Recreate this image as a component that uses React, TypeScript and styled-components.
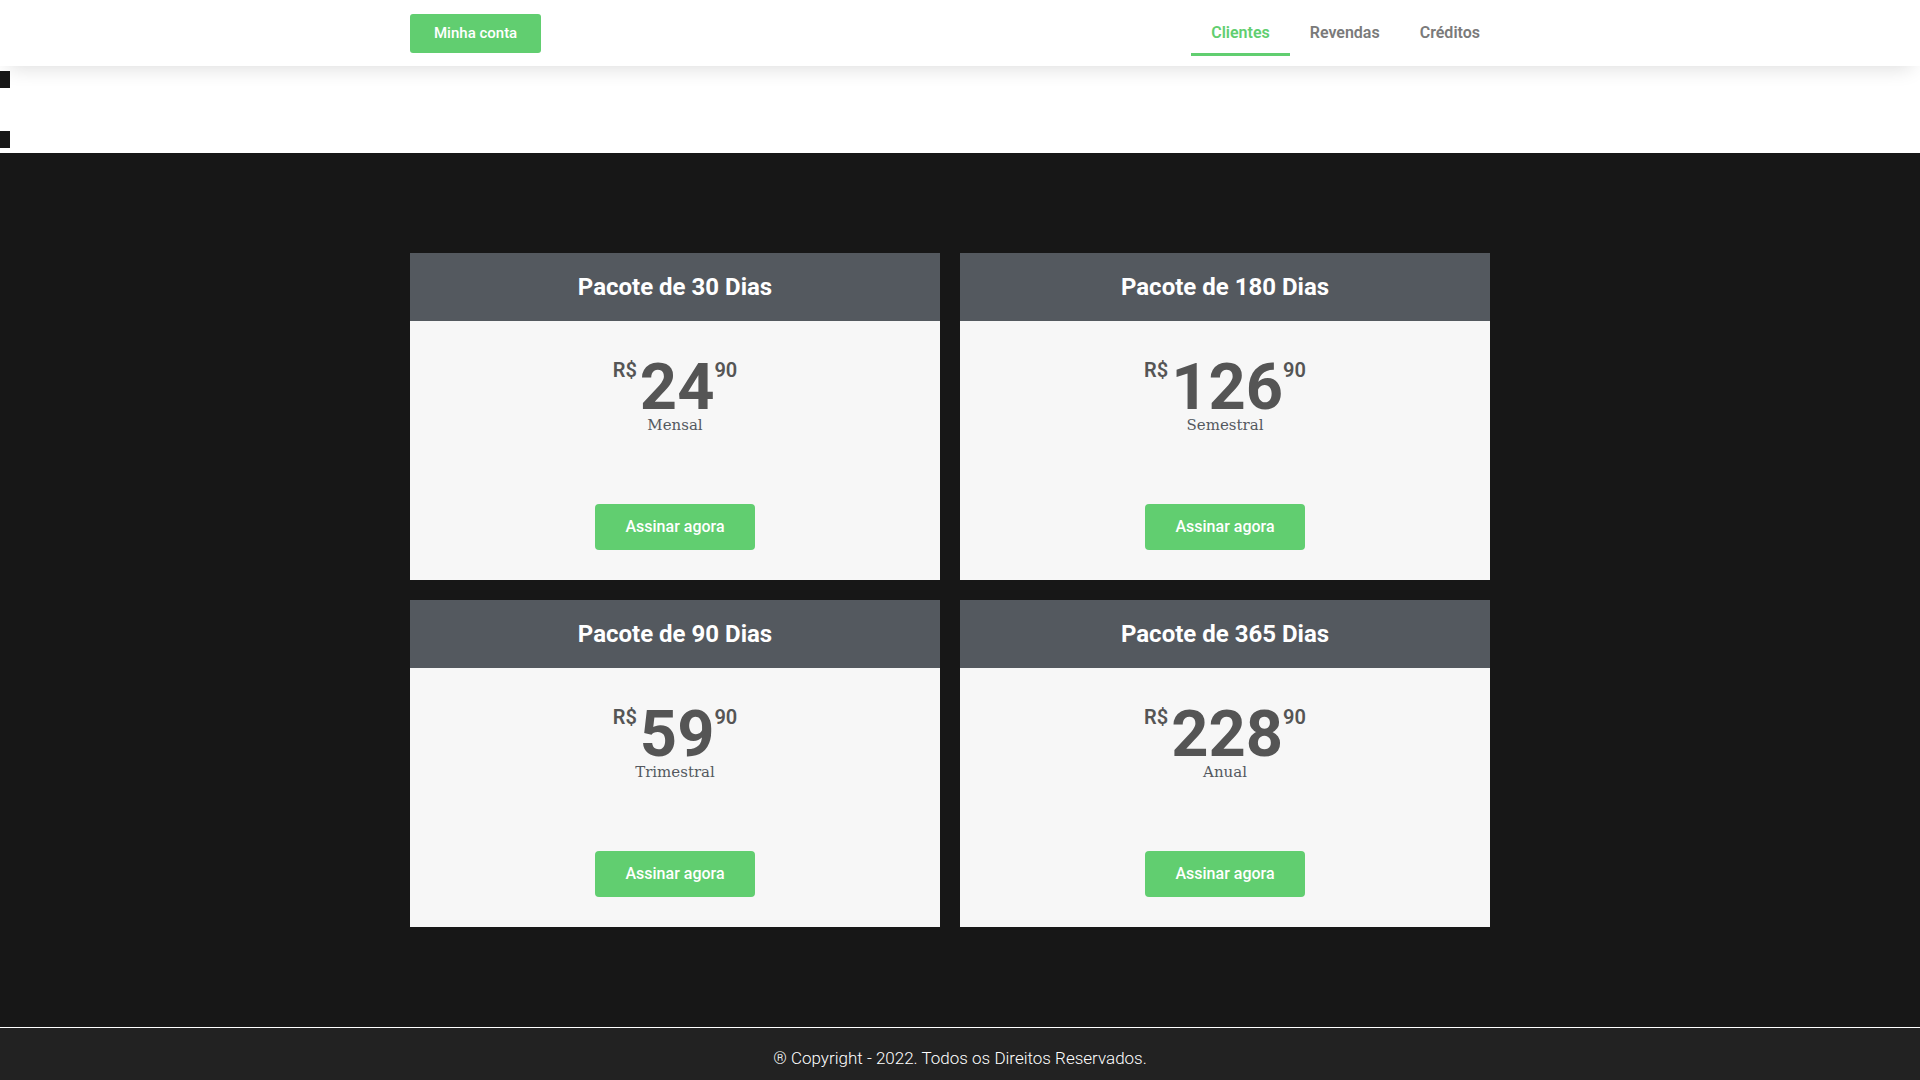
import React from "react";
import styled, { createGlobalStyle } from "styled-components";

const sans = `Roboto, "Liberation Sans", sans-serif`;
const slab = `"Roboto Slab", "DejaVu Serif", serif`;
const green = "#61ce70";

const GlobalStyle = createGlobalStyle`
  *, *::before, *::after { box-sizing: border-box; }
  body {
    margin: 0;
    background: #222222;
    font-family: ${sans};
    overflow-x: hidden;
  }
  h2, p, ul { margin: 0; padding: 0; }
`;

const Header = styled.header`
  position: relative;
  z-index: 1;
  padding: 10px 10px 10px 0;
  background: #ffffff;
  box-shadow: 0 10px 20px -8px rgba(0, 0, 0, 0.14);
`;

const HeaderInner = styled.div`
  display: flex;
  align-items: center;
  justify-content: space-between;
  max-width: 1090px;
  margin: 0 auto;
`;

const Button = styled.button<{ $size: "small" | "medium" }>`
  border: 0;
  border-radius: ${(p) => (p.$size === "small" ? 3 : 4)}px;
  padding: ${(p) => (p.$size === "small" ? "12px 24px" : "15px 30px")};
  background: ${green};
  color: #ffffff;
  font: 500 ${(p) => (p.$size === "small" ? "15px/15px" : "16px/16px")} ${sans};
  cursor: pointer;
`;

const NavList = styled.ul`
  display: flex;
  list-style: none;
`;

const NavLink = styled.a<{ $active?: boolean }>`
  display: block;
  padding: 13px 20px 10px;
  border-bottom: 3px solid ${(p) => (p.$active ? green : "transparent")};
  color: ${(p) => (p.$active ? green : "#7a7a7a")};
  font: 600 16px/20px ${sans};
  text-decoration: none;
`;

const Strip = styled.div`
  display: flex;
  flex-direction: column;
  gap: 43px;
  padding: 5px 0;
  background: #ffffff;
`;

const Marker = styled.div`
  width: 10px;
  height: 17px;
  background: #171717;
`;

const Plans = styled.main`
  padding: 100px 20px 100px 0;
  background: #171717;
`;

const PlanGrid = styled.div`
  display: grid;
  grid-template-columns: repeat(2, 1fr);
  gap: 20px;
  max-width: 1080px;
  margin: 0 auto;
`;

const Card = styled.article`
  background: #f7f7f7;
  text-align: center;
`;

const CardTitle = styled.h2`
  padding: 20px;
  background: #54595f;
  color: #ffffff;
  font: 700 24px/28px ${sans};
`;

const Price = styled.p`
  display: flex;
  justify-content: center;
  align-items: flex-start;
  padding-top: 40px;
  color: #555555;
  font: 700 65px/52px ${sans};
`;

const Small = styled.span<{ $before?: boolean }>`
  margin-right: ${(p) => (p.$before ? 3 : 0)}px;
  font-size: 20px;
  font-weight: 600;
  line-height: 18px;
`;

const Period = styled.p`
  color: #54595f;
  font: 400 15px/24px ${slab};
`;

const CardFooter = styled.div`
  padding: 67px 20px 30px;
`;

const Footer = styled.footer`
  border-top: 1px solid #ffffff;
  padding: 20px 0;
  background: #222222;
  color: #ffffff;
  font: 300 17px/20px ${sans};
  text-align: center;
`;

const links = ["Clientes", "Revendas", "Créditos"];

const plans = [
  { days: 30, amount: "24", period: "Mensal" },
  { days: 180, amount: "126", period: "Semestral" },
  { days: 90, amount: "59", period: "Trimestral" },
  { days: 365, amount: "228", period: "Anual" },
];

export default function App() {
  return (
    <>
      <GlobalStyle />
      <Header>
        <HeaderInner>
          <Button $size="small">Minha conta</Button>
          <nav>
            <NavList>
              {links.map((label, i) => (
                <li key={label}>
                  <NavLink href="#" $active={i === 0}>{label}</NavLink>
                </li>
              ))}
            </NavList>
          </nav>
        </HeaderInner>
      </Header>
      <Strip>
        <Marker />
        <Marker />
      </Strip>
      <Plans>
        <PlanGrid>
          {plans.map((plan) => (
            <Card key={plan.days}>
              <CardTitle>Pacote de {plan.days} Dias</CardTitle>
              <Price>
                <Small $before>R$</Small>
                <span>{plan.amount}</span>
                <Small>90</Small>
              </Price>
              <Period>{plan.period}</Period>
              <CardFooter>
                <Button $size="medium">Assinar agora</Button>
              </CardFooter>
            </Card>
          ))}
        </PlanGrid>
      </Plans>
      <Footer>® Copyright - 2022. Todos os Direitos Reservados.</Footer>
    </>
  );
}
